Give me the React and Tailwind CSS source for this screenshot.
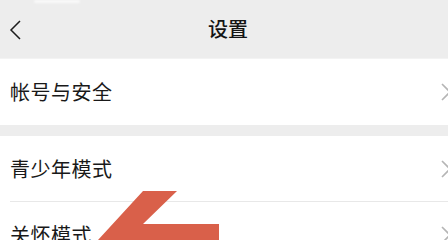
const rows = [
  { label: '帐号与安全', group: 1 },
  { label: '青少年模式', group: 2 },
  { label: '关怀模式', group: 2 },
]

const Chevron = () => (
  <svg width="12" height="20" viewBox="0 0 12 20" className="shrink-0 -mr-1">
    <path d="M2 2 L10 10 L2 18" fill="none" stroke="#b5b5b5" strokeWidth="1.6" />
  </svg>
)

const Row = ({ label, divider }) => (
  <div className="relative h-[66px] bg-white flex items-center justify-between pl-[10px]">
    <span className="text-[20px] leading-none text-[#191919] tracking-[0.5px]">{label}</span>
    <Chevron />
    {divider && <div className="absolute bottom-0 left-[10px] right-0 h-px bg-[#e8e8e8]" />}
  </div>
)

export default function App() {
  return (
    <div
      className="relative w-[448px] h-[240px] overflow-hidden bg-[#ededed]"
      style={{ fontFamily: '"Noto Sans CJK SC", "Noto Sans", sans-serif' }}
    >
      {/* 顶部导航 */}
      <div className="relative h-[59px] flex items-center justify-center border-b border-[#f3f3f3]">
        <div className="absolute top-0 left-[34px] w-[46px] h-[3px] rounded-full bg-white/70 blur-[1px]" />
        <svg width="14" height="22" viewBox="0 0 14 22" className="absolute left-[9px] top-[19px]">
          <path d="M11 2 L2 11 L11 20" fill="none" stroke="#1c1c1c" strokeWidth="1.5" />
        </svg>
        <span className="text-[20px] font-medium text-[#141414] ml-[8px]">设置</span>
      </div>

      <Row label={rows[0].label} />
      <div className="h-[11px]" />
      <Row label={rows[1].label} divider />
      <Row label={rows[2].label} />

      {/* 标注箭头 */}
      <svg width="448" height="240" className="absolute inset-0 pointer-events-none">
        <polygon points="143,191 177,191 143,224 219,224 219,240 98,240" fill="#d9604a" />
      </svg>
    </div>
  )
}
